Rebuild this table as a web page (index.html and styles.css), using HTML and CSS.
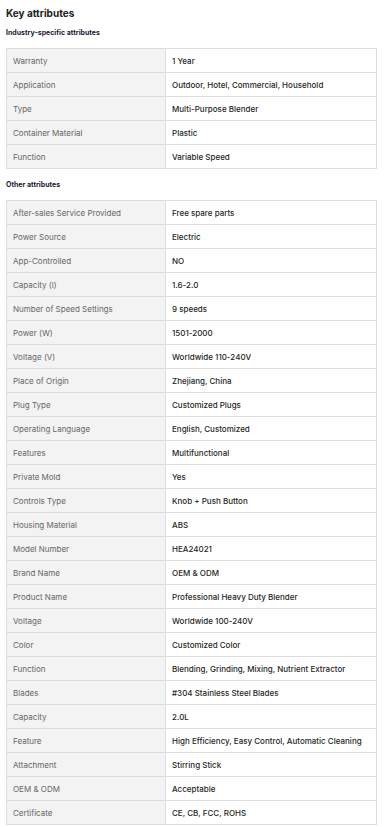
FILE: index.html
```html
<!DOCTYPE html>
<html lang="en">
<head>
    <meta charset="UTF-8">
    <title>Key attributes</title>
    <link rel="stylesheet" href="styles.css">
</head>
<body>
    <div class="attributes">
        <h2>Key attributes</h2>

        <h3>Industry-specific attributes</h3>
        <table class="attr-table">
            <tr><td>Warranty</td><td>1 Year</td></tr>
            <tr><td>Application</td><td>Outdoor, Hotel, Commercial, Household</td></tr>
            <tr><td>Type</td><td>Multi-Purpose Blender</td></tr>
            <tr><td>Container Material</td><td>Plastic</td></tr>
            <tr><td>Function</td><td>Variable Speed</td></tr>
        </table>

        <h3>Other attributes</h3>
        <table class="attr-table">
            <tr><td>After-sales Service Provided</td><td>Free spare parts</td></tr>
            <tr><td>Power Source</td><td>Electric</td></tr>
            <tr><td>App-Controlled</td><td>NO</td></tr>
            <tr><td>Capacity (l)</td><td>1.6-2.0</td></tr>
            <tr><td>Number of Speed Settings</td><td>9 speeds</td></tr>
            <tr><td>Power (W)</td><td>1501-2000</td></tr>
            <tr><td>Voltage (V)</td><td>Worldwide 110-240V</td></tr>
            <tr><td>Place of Origin</td><td>Zhejiang, China</td></tr>
            <tr><td>Plug Type</td><td>Customized Plugs</td></tr>
            <tr><td>Operating Language</td><td>English, Customized</td></tr>
            <tr><td>Features</td><td>Multifunctional</td></tr>
            <tr><td>Private Mold</td><td>Yes</td></tr>
            <tr><td>Controls Type</td><td>Knob + Push Button</td></tr>
            <tr><td>Housing Material</td><td>ABS</td></tr>
            <tr><td>Model Number</td><td>HEA24021</td></tr>
            <tr><td>Brand Name</td><td>OEM &amp; ODM</td></tr>
            <tr><td>Product Name</td><td>Professional Heavy Duty Blender</td></tr>
            <tr><td>Voltage</td><td>Worldwide 100-240V</td></tr>
            <tr><td>Color</td><td>Customized Color</td></tr>
            <tr><td>Function</td><td>Blending, Grinding, Mixing, Nutrient Extractor</td></tr>
            <tr><td>Blades</td><td>#304 Stainless Steel Blades</td></tr>
            <tr><td>Capacity</td><td>2.0L</td></tr>
            <tr><td>Feature</td><td>High Efficiency, Easy Control, Automatic Cleaning</td></tr>
            <tr><td>Attachment</td><td>Stirring Stick</td></tr>
            <tr><td>OEM &amp; ODM</td><td>Acceptable</td></tr>
            <tr><td>Certificate</td><td>CE, CB, FCC, ROHS</td></tr>
        </table>
    </div>
</body>
</html>
```

FILE: styles.css
```css
body {
    margin: 0;
    background: #fff;
    font-family: Inter, Roboto, Arial, sans-serif;
    color: #222;
}
.attributes {
    padding: 6px 9px 0 6px;
}
h2 {
    font-size: 10px;
    font-weight: 700;
    margin: 0;
    line-height: 14px;
    color: #222;
}
h3 {
    font-size: 7px;
    font-weight: 700;
    margin: 8px 0 10px;
    line-height: 10px;
    color: #1a1a33;
}
.attr-table + h3 {
    margin-top: 11px;
}
.attr-table {
    width: 100%;
    border-collapse: collapse;
    table-layout: fixed;
    font-size: 8px;
}
.attr-table td {
    height: 23px;
    padding: 0 6px;
    border: 1px solid #ddd;
    vertical-align: middle;
}
.attr-table td:first-child {
    width: 146px;
    background: #f3f3f3;
    color: #666;
}
.attr-table td:last-child {
    background: #fff;
    color: #1f1f1f;
    font-weight: 500;
}
```
